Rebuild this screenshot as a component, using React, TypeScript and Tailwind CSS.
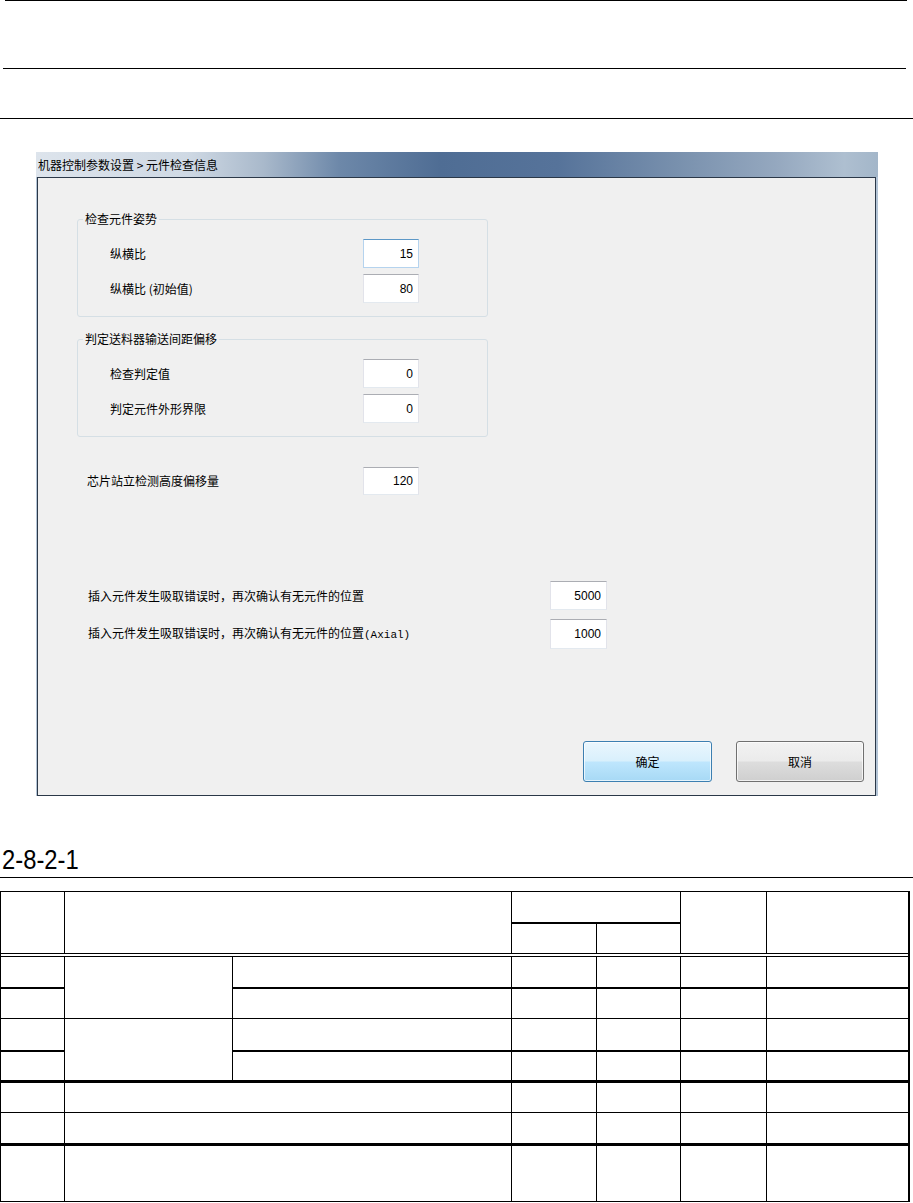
import type { ReactNode } from 'react'

const cell = 'border border-black p-0'

function NumBox({ value, hot, w = 'w-[56px]', h = 'h-[29px]' }: { value: string; hot?: boolean; w?: string; h?: string }) {
  return (
    <input
      readOnly
      defaultValue={value}
      className={`${w} ${h} bg-white text-right pr-[5px] text-[12px] text-black font-['Liberation_Sans',Arial,sans-serif] outline-none border ${
        hot ? 'border-[#b5d3ee] border-t-[#5d98c7]' : 'border-[#e2e3ea] border-t-[#abadb3] border-b-[#e3e9ef]'
      }`}
    />
  )
}

function Field({ label, value, hot }: { label: ReactNode; value: string; hot?: boolean }) {
  return (
    <div className="flex items-center">
      <span className="w-[253px] text-[12px]">{label}</span>
      <NumBox value={value} hot={hot} />
    </div>
  )
}

function Group({ title, children, className = '' }: { title: string; children: ReactNode; className?: string }) {
  return (
    <div className={`relative ml-[39px] w-[411px] h-[98px] rounded-[3px] border border-[#d5dfe5] pl-[32px] pt-[19px] flex flex-col gap-[6px] ${className}`}>
      <span className="absolute -top-[9px] left-[5px] bg-[#f0f0f0] px-[2px] text-[12px] leading-[16px]">{title}</span>
      {children}
    </div>
  )
}

function Dialog() {
  return (
    <div className="ml-[36px] w-[842px] bg-[#b3c4d6] flex flex-col font-['Noto_Sans_CJK_SC',sans-serif] text-black">
      <div className="h-[25px] flex items-center pl-[2px] text-[12px] bg-[linear-gradient(to_right,#dde4ec_0%,#cfd9e4_18%,#a9b9cb_27%,#6d88a9_36%,#4f6d94_48%,#56739a_62%,#7890ad_76%,#95a8bf_88%,#aebfd0_96%,#a3b6c9_100%)]">
        机器控制参数设置 &gt; 元件检查信息
      </div>
      <div className="ml-[1px] mr-[2px] h-[619px] bg-[#f0f0f0] border border-[#2b3848] flex flex-col">
        <Group title="检查元件姿势" className="mt-[41px]">
          <Field label="纵横比" value="15" hot />
          <Field label="纵横比 (初始值)" value="80" />
        </Group>
        <Group title="判定送料器输送间距偏移" className="mt-[22px]">
          <Field label="检查判定值" value="0" />
          <Field label="判定元件外形界限" value="0" />
        </Group>
        <div className="mt-[30px] ml-[49px] flex items-center">
          <span className="w-[276px] text-[12px]">芯片站立检测高度偏移量</span>
          <NumBox value="120" h="h-[28px]" />
        </div>
        <div className="mt-[86px] ml-[50px] flex items-center">
          <span className="w-[462px] text-[12px]">插入元件发生吸取错误时，再次确认有无元件的位置</span>
          <NumBox value="5000" w="w-[57px]" />
        </div>
        <div className="mt-[9px] ml-[50px] flex items-center">
          <span className="w-[462px] text-[12px]">
            插入元件发生吸取错误时，再次确认有无元件的位置
            <span className="font-['Liberation_Mono',monospace] text-[11px]">(Axial)</span>
          </span>
          <NumBox value="1000" w="w-[57px]" h="h-[30px]" />
        </div>
        <div className="mt-auto flex justify-end gap-[24px] pr-[11px] pb-[13px]">
          <button className="w-[129px] h-[41px] rounded-[3px] border border-[#3c7fb1] text-[12px] shadow-[inset_0_0_0_1px_rgba(255,255,255,0.7)] bg-[linear-gradient(to_bottom,#eaf6fd_0%,#d9f0fc_48%,#bee6fd_52%,#a7d9f5_100%)]">
            确定
          </button>
          <button className="w-[128px] h-[41px] rounded-[3px] border border-[#707070] text-[12px] shadow-[inset_0_0_0_1px_rgba(255,255,255,0.7)] bg-[linear-gradient(to_bottom,#f2f2f2_0%,#ebebeb_48%,#dddddd_52%,#cfcfcf_100%)]">
            取消
          </button>
        </div>
      </div>
    </div>
  )
}

function SpecTable() {
  return (
    <table className="mt-[13px] table-fixed border-collapse w-[908px]">
      <colgroup>
        <col className="w-[64px]" />
        <col className="w-[168px]" />
        <col className="w-[279px]" />
        <col className="w-[85px]" />
        <col className="w-[84px]" />
        <col className="w-[86px]" />
        <col className="w-[142px]" />
      </colgroup>
      <thead>
        <tr className="h-[31px]">
          <th rowSpan={2} className={cell} />
          <th rowSpan={2} colSpan={2} className={cell} />
          <th colSpan={2} className={`${cell} border-b-2`} />
          <th rowSpan={2} className={cell} />
          <th rowSpan={2} className={`${cell} border-r-2`} />
        </tr>
        <tr className="h-[31px]">
          <th className={cell} />
          <th className={cell} />
        </tr>
        <tr className="h-[3px]">
          <th colSpan={7} className={`${cell} border-r-2`} />
        </tr>
      </thead>
      <tbody>
        <tr className="h-[31px]">
          <td className={`${cell} border-b-2`} />
          <td rowSpan={2} className={cell} />
          <td className={`${cell} border-b-2`} />
          <td className={`${cell} border-b-2`} />
          <td className={`${cell} border-b-2`} />
          <td className={`${cell} border-b-2`} />
          <td className={`${cell} border-b-2 border-r-2`} />
        </tr>
        <tr className="h-[31px]">
          <td className={cell} />
          <td className={cell} />
          <td className={cell} />
          <td className={cell} />
          <td className={cell} />
          <td className={`${cell} border-r-2`} />
        </tr>
        <tr className="h-[32px]">
          <td className={`${cell} border-b-2`} />
          <td rowSpan={2} className={cell} />
          <td className={`${cell} border-b-2`} />
          <td className={`${cell} border-b-2`} />
          <td className={`${cell} border-b-2`} />
          <td className={`${cell} border-b-2`} />
          <td className={`${cell} border-b-2 border-r-2`} />
        </tr>
        <tr className="h-[31px]">
          <td className={cell} />
          <td className={cell} />
          <td className={cell} />
          <td className={cell} />
          <td className={cell} />
          <td className={`${cell} border-r-2`} />
        </tr>
        <tr className="h-[31px]">
          <td className={`${cell} border-t-[3px]`} />
          <td colSpan={2} className={`${cell} border-t-[3px]`} />
          <td className={`${cell} border-t-[3px]`} />
          <td className={`${cell} border-t-[3px]`} />
          <td className={`${cell} border-t-[3px]`} />
          <td className={`${cell} border-t-[3px] border-r-2`} />
        </tr>
        <tr className="h-[32px]">
          <td className={cell} />
          <td colSpan={2} className={cell} />
          <td className={cell} />
          <td className={cell} />
          <td className={cell} />
          <td className={`${cell} border-r-2`} />
        </tr>
        <tr className="h-[57px]">
          <td className={`${cell} border-t-[3px]`} />
          <td colSpan={2} className={`${cell} border-t-[3px]`} />
          <td className={`${cell} border-t-[3px]`} />
          <td className={`${cell} border-t-[3px]`} />
          <td className={`${cell} border-t-[3px]`} />
          <td className={`${cell} border-t-[3px] border-r-2`} />
        </tr>
      </tbody>
    </table>
  )
}

export default function App() {
  return (
    <div className="w-[913px] h-[1203px] bg-white overflow-hidden">
      <div className="ml-[5px] w-[902px] h-px bg-black" />
      <div className="mt-[67px] ml-[3px] w-[903px] h-px bg-black" />
      <div className="mt-[49px] w-full h-px bg-black" />
      <div className="mt-[33px]">
        <Dialog />
      </div>
      <div className="mt-[50px] ml-[2px] h-[28px] leading-[28px] text-[28px] text-black font-['Liberation_Sans',Arial,sans-serif] origin-left scale-x-[0.85]">
        2-8-2-1
      </div>
      <div className="mt-[3px] w-full h-px bg-black" />
      <SpecTable />
    </div>
  )
}
